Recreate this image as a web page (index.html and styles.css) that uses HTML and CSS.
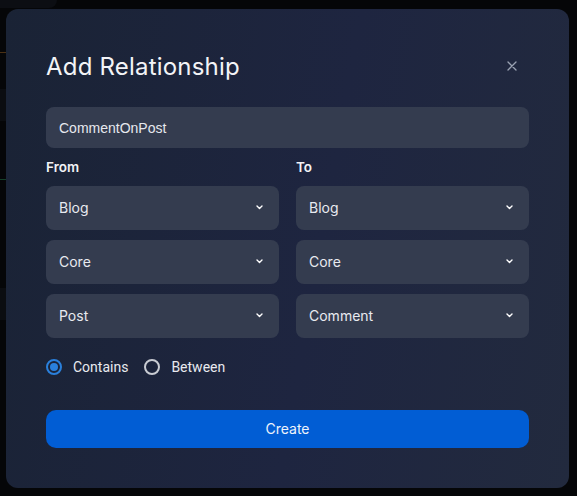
FILE: index.html
```html
<!DOCTYPE html>
<html>
<head>
<meta charset="utf-8">
<link rel="stylesheet" href="styles.css">
</head>
<body>
<div class="app">
  <div class="app-top"></div>
  <div class="app-line orange"></div>
  <div class="app-block b1"></div>
  <div class="app-line green"></div>
  <div class="app-block b2"></div>
</div>
<div class="overlay">
  <div class="modal">
    <div class="header">
      <h1 class="title">Add Relationship</h1>
      <button class="close" aria-label="Close">
        <svg width="10" height="10" viewBox="0 0 10 10"><path d="M1 1L9 9M9 1L1 9" stroke="#9aa2b2" stroke-width="1.3" fill="none" stroke-linecap="round"/></svg>
      </button>
    </div>
    <div class="text-input">CommentOnPost</div>
    <div class="columns">
      <div class="col">
        <div class="label">From</div>
        <div class="select"><span>Blog</span><svg class="chev" width="7" height="5" viewBox="0 0 7 5"><path d="M1 1L3.5 3.5L6 1" stroke="#fff" stroke-width="1.4" fill="none" stroke-linecap="round" stroke-linejoin="round"/></svg></div>
        <div class="select"><span>Core</span><svg class="chev" width="7" height="5" viewBox="0 0 7 5"><path d="M1 1L3.5 3.5L6 1" stroke="#fff" stroke-width="1.4" fill="none" stroke-linecap="round" stroke-linejoin="round"/></svg></div>
        <div class="select"><span>Post</span><svg class="chev" width="7" height="5" viewBox="0 0 7 5"><path d="M1 1L3.5 3.5L6 1" stroke="#fff" stroke-width="1.4" fill="none" stroke-linecap="round" stroke-linejoin="round"/></svg></div>
      </div>
      <div class="col">
        <div class="label">To</div>
        <div class="select"><span>Blog</span><svg class="chev" width="7" height="5" viewBox="0 0 7 5"><path d="M1 1L3.5 3.5L6 1" stroke="#fff" stroke-width="1.4" fill="none" stroke-linecap="round" stroke-linejoin="round"/></svg></div>
        <div class="select"><span>Core</span><svg class="chev" width="7" height="5" viewBox="0 0 7 5"><path d="M1 1L3.5 3.5L6 1" stroke="#fff" stroke-width="1.4" fill="none" stroke-linecap="round" stroke-linejoin="round"/></svg></div>
        <div class="select"><span>Comment</span><svg class="chev" width="7" height="5" viewBox="0 0 7 5"><path d="M1 1L3.5 3.5L6 1" stroke="#fff" stroke-width="1.4" fill="none" stroke-linecap="round" stroke-linejoin="round"/></svg></div>
      </div>
    </div>
    <div class="radios">
      <label class="radio"><span class="dot checked"></span>Contains</label>
      <label class="radio"><span class="dot"></span>Between</label>
    </div>
    <button class="create">Create</button>
  </div>
</div>
</body>
</html>
```
FILE: styles.css
```css
* { box-sizing: border-box; }
html, body { margin: 0; padding: 0; }
body {
  width: 577px;
  height: 496px;
  background: #050608;
  font-family: Inter, "Noto Sans", sans-serif;
  color: #eef0f4;
  overflow: hidden;
  position: relative;
}
.app { width: 577px; height: 496px; }
.app-top { width: 57px; height: 8px; background: #0c0e13; border-radius: 0 0 8px 0; }
.app-line { height: 1px; width: 20px; margin-top: 44px; }
.app-line.orange { background: #4a3014; }
.app-line.green { background: #15402a; margin-top: 58px; }
.app-block { width: 20px; height: 32px; background: #0b0d11; margin-top: 36px; }
.app-block.b2 { margin-top: 108px; }

.overlay {
  position: absolute;
  inset: 0;
  padding: 9px 8px 8px 6px;
}
.modal {
  width: 563px;
  height: 479px;
  border-radius: 12px;
  background: linear-gradient(100deg, #1a2335 0%, #1e2540 55%, #222a3e 100%);
  padding: 40px;
  display: flex;
  flex-direction: column;
}
.header {
  display: flex;
  align-items: center;
  justify-content: space-between;
  height: 36px;
}
.title {
  margin: 0;
  font-size: 24px;
  font-weight: 400;
  letter-spacing: 0.2px;
  color: #f3f4f7;
  line-height: 36px;
}
.close {
  width: 34px;
  height: 34px;
  border: none;
  background: none;
  padding: 0;
  display: flex;
  align-items: center;
  justify-content: center;
  margin-top: -2px;
}
.text-input {
  margin-top: 22px;
  height: 41px;
  border-radius: 8px;
  background: #343c4f;
  padding: 0 13px;
  display: flex;
  align-items: center;
  font-family: "Liberation Sans", Arial, sans-serif;
  font-size: 14px;
  color: #e6e8ee;
}
.columns {
  margin-top: 10px;
  display: grid;
  grid-template-columns: 233px 233px;
  column-gap: 17px;
}
.col { display: flex; flex-direction: column; gap: 10px; }
.label {
  font-size: 13.5px;
  font-weight: 600;
  line-height: 18px;
  color: #f2f3f6;
}
.select {
  height: 44px;
  border-radius: 8px;
  background: #343c4f;
  padding: 0 16px 2px 13px;
  display: flex;
  align-items: center;
  justify-content: space-between;
  font-size: 14px;
  color: #e8eaf0;
}
.chev { display: block; }
.radios {
  margin-top: 19px;
  height: 20px;
  display: flex;
  align-items: center;
  gap: 16px;
  font-family: Roboto, "Noto Sans", sans-serif;
  font-size: 14px;
  color: #e8eaef;
}
.radio { display: flex; align-items: center; gap: 11px; }
.dot {
  width: 16px;
  height: 16px;
  border-radius: 50%;
  border: 2px solid #c9ccd3;
  display: flex;
  align-items: center;
  justify-content: center;
}
.dot.checked { border-color: #2a80dc; }
.dot.checked::after {
  content: "";
  width: 8px;
  height: 8px;
  border-radius: 50%;
  background: #2a80dc;
}
.create {
  margin-top: 33px;
  height: 38px;
  border: none;
  border-radius: 10px;
  background: #015dd4;
  color: #eef3fb;
  font-family: Inter, "Noto Sans", sans-serif;
  font-size: 14px;
  padding-bottom: 2px;
  width: 100%;
}
```
